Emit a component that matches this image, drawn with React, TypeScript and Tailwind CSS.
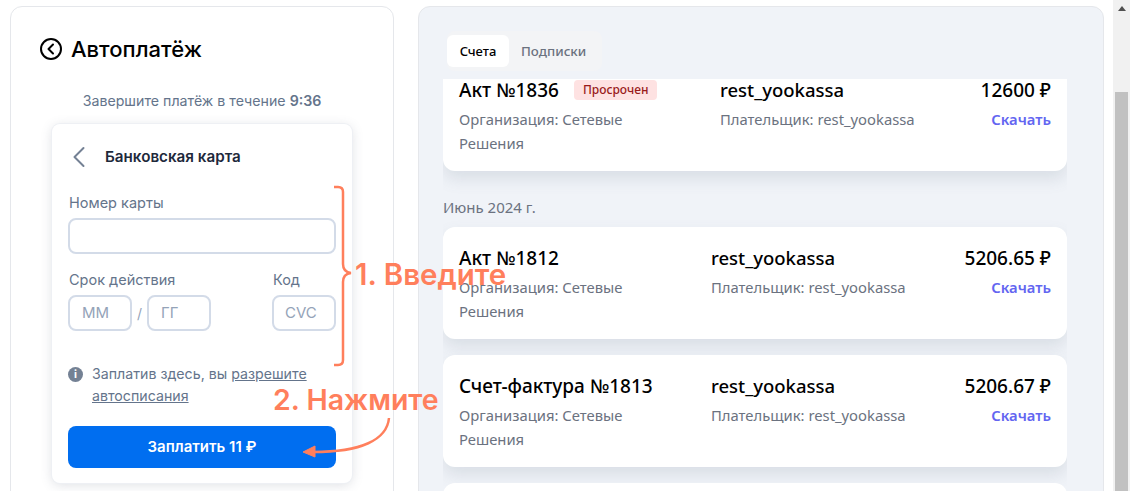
const MANROPE = "font-['Inter','Noto_Sans',sans-serif]"

const invoices = [
  { title: 'Акт №1812', amount: '5206.65 ₽' },
  { title: 'Счет-фактура №1813', amount: '5206.67 ₽' },
]

function InvoiceCard({ title, amount, badge, leftWidth = 'w-[252px]' }: {
  title: string; amount: string; badge?: string; leftWidth?: string
}) {
  return (
    <div className="h-[112px] rounded-xl bg-white px-4 pt-4 shadow-[0_8px_16px_rgba(100,116,139,0.16)]">
      <div className="flex">
        <div className={`shrink-0 ${leftWidth}`}>
          <div className="flex h-[30px] items-center gap-[15px]">
            <p className="text-[19px] font-medium text-black">{title}</p>
            {badge && (
              <span className="rounded bg-[#fee2e2] px-[9px] py-px text-[12px] font-medium leading-[18px] text-[#991b1b]">{badge}</span>
            )}
          </div>
          <p className="mt-[2px] w-[200px] text-[14.8px] leading-6 text-[#6b7280]">Организация: Сетевые Решения</p>
        </div>
        <div className="flex-1">
          <p className="flex h-[30px] items-center text-[18.5px] font-medium text-black">rest_yookassa</p>
          <p className="mt-[2px] text-[14.8px] leading-6 text-[#6b7280]">Плательщик: rest_yookassa</p>
        </div>
        <div className="text-right">
          <p className="flex h-[30px] items-center justify-end text-[19px] font-medium text-black">{amount}</p>
          <p className="mt-[2px] text-[14.8px] font-semibold leading-6 text-[#6366f1]">Скачать</p>
        </div>
      </div>
    </div>
  )
}

function Annotations() {
  return (
    <>
      <svg className="absolute left-0 top-0" width="450" height="491" fill="none">
        <path d="M334 187h4q5 0 5 5v72q0 8 8 9q-8 1 -8 9v78q0 5 -5 5h-4" stroke="#ff7f5c" strokeWidth="2.5" />
        <path d="M389 418c-2 22 -28 34 -76 34" stroke="#ff7f5c" strokeWidth="2.5" />
        <path d="M303 452l12 -6v11z" fill="#ff7f5c" stroke="#ff7f5c" strokeWidth="1" />
      </svg>
      <p className={`absolute left-[355px] top-[256px] text-[29.5px] font-semibold leading-9 whitespace-nowrap text-[#ff7f5c] ${MANROPE}`}>1. Введите</p>
      <p className={`absolute left-[273px] top-[382px] text-[28.5px] font-semibold leading-9 whitespace-nowrap text-[#ff7f5c] ${MANROPE}`}>2. Нажмите</p>
    </>
  )
}

function PaymentForm() {
  return (
    <div className={`ml-[41px] mt-[11px] h-[359px] w-[300px] rounded-lg bg-white px-4 pt-[17px] shadow-[0_2px_12px_rgba(71,85,105,0.18)] ring-1 ring-[#eef0f4] ${MANROPE}`}>
      <div className="flex h-8 items-center">
        <svg width="24" height="24" viewBox="0 0 24 24" fill="none" stroke="#748194" strokeWidth="2">
          <path d="M15.5 3 6.5 12l9 9" strokeLinecap="round" strokeLinejoin="round" />
        </svg>
        <span className="ml-[13px] text-[15.2px] font-semibold text-[#1e293b]">Банковская карта</span>
      </div>
      <p className="mt-[20px] pl-px text-[14.5px] leading-5 text-[#64748b]">Номер карты</p>
      <div className="mt-[5px] h-[36px] w-[268px] rounded-lg border-2 border-[#d3dbe8]" />
      <div className="mt-[16px] flex">
        <div className="w-[204px]">
          <p className="pl-px text-[14.5px] leading-5 text-[#64748b]">Срок действия</p>
          <div className="mt-[5px] flex items-center">
            <div className="flex h-[36px] w-[64px] items-center rounded-lg border-2 border-[#d3dbe8] pl-3 text-[15px] text-[#94a3b8]">ММ</div>
            <span className="w-[15px] text-center text-[14px] text-[#94a3b8]">/</span>
            <div className="flex h-[36px] w-[64px] items-center rounded-lg border-2 border-[#d3dbe8] pl-3 text-[15px] text-[#94a3b8]">ГГ</div>
          </div>
        </div>
        <div>
          <p className="pl-px text-[14.5px] leading-5 text-[#64748b]">Код</p>
          <div className="mt-[5px] flex h-[36px] w-[64px] items-center rounded-lg border-2 border-[#d3dbe8] pl-[11px] text-[15px] text-[#94a3b8]">CVC</div>
        </div>
      </div>
      <div className="mt-[32px] flex">
        <span className="mt-[4px] flex h-[15px] w-[15px] shrink-0 items-center justify-center rounded-full bg-[#748194] text-[11px] font-bold text-white">i</span>
        <p className="ml-[9px] text-[14.2px] leading-[22px] text-[#64748b]">
          Заплатив здесь, вы <span className="underline">разрешите автосписания</span>
        </p>
      </div>
      <button className="mt-[19px] h-[42px] w-[268px] rounded-lg bg-[#006ef0] text-[15px] font-semibold text-white">Заплатить 11 ₽</button>
    </div>
  )
}

export default function App() {
  return (
    <div className="relative flex h-[491px] w-[1130px] overflow-hidden bg-white font-['Noto_Sans',sans-serif]">
      <div className="flex flex-1 gap-6 pl-[10px] pr-[9px] pt-[6px]">
        <div className={`h-[520px] w-[384px] shrink-0 rounded-xl border border-[#e5e7eb] bg-white ${MANROPE}`}>
          <div className="flex items-center gap-[9px] pl-[29px] pt-[26px]">
            <svg width="22" height="22" viewBox="0 0 22 22" fill="none" stroke="#000" strokeWidth="2">
              <circle cx="11" cy="11" r="10" />
              <path d="M13 6.5 8.5 11l4.5 4.5" strokeLinecap="round" strokeLinejoin="round" />
            </svg>
            <h1 className="text-[22px] font-medium leading-8 text-black">Автоплатёж</h1>
          </div>
          <p className="mt-6 text-center text-[14.2px] leading-6 text-[#64748b]">
            Завершите платёж в течение <b className="font-semibold">9:36</b>
          </p>
          <PaymentForm />
        </div>
        <div className="h-[520px] flex-1 rounded-xl border border-[#e5e7eb] bg-[#f0f3f8] pl-6 pr-9 pt-6">
          <div className="ml-[4px] flex h-[40px] w-[155px] items-center rounded-lg bg-[#f3f4f6]">
            <span className="flex h-[32px] w-[62px] items-center justify-center rounded-md bg-white pt-px text-[13px] font-medium text-black">Счета</span>
            <span className="ml-3 pt-px text-[13.3px] font-medium text-[#6b7280]">Подписки</span>
          </div>
          <div className="mt-[8px] h-[420px] overflow-hidden">
            <div className="-mt-[20px]">
              <InvoiceCard title="Акт №1836" amount="12600 ₽" badge="Просрочен" leftWidth="w-[261px]" />
            </div>
            <p className="mt-[26px] text-[15px] leading-5 text-[#6b7280]">Июнь 2024 г.</p>
            <div className="mt-[10px] flex flex-col gap-4">
              {invoices.map((inv) => (
                <InvoiceCard key={inv.title} title={inv.title} amount={inv.amount} />
              ))}
              <div className="h-[112px] rounded-xl bg-white" />
            </div>
          </div>
        </div>
      </div>
      <div className="flex w-[17px] shrink-0 flex-col items-center bg-[#f1f1f1]">
        <svg className="mt-[6px]" width="8" height="5" viewBox="0 0 8 5"><path d="M4 0l4 5H0z" fill="#505050" /></svg>
        <div className="mt-[81px] h-[400px] w-[13px] bg-[#c1c1c1]" />
      </div>
      <Annotations />
    </div>
  )
}
